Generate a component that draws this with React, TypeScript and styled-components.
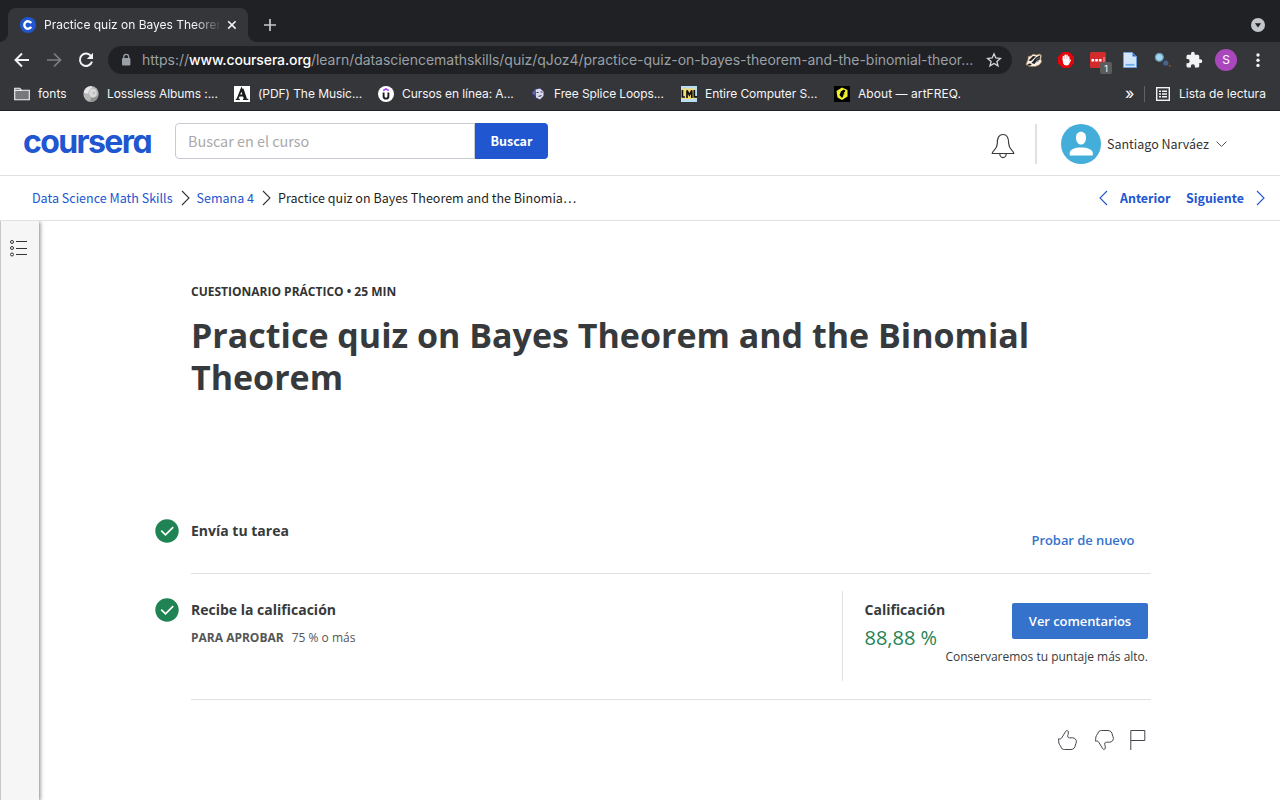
import React from "react";
import styled, { createGlobalStyle } from "styled-components";

const sourceSans = `"Noto Sans CJK SC", "Source Sans Pro", sans-serif`;
const openSans = `"Open Sans", sans-serif`;
const systemSans = `Inter, Roboto, sans-serif`;

const GlobalStyle = createGlobalStyle`
  * { box-sizing: border-box; }
  body { margin: 0; background: #fff; }
  h1, h2, p { margin: 0; }
  button, input { font: inherit; }
`;

const Window = styled.div`
  width: 1280px;
  height: 800px;
  overflow: hidden;
  display: flex;
  flex-direction: column;
  background: #fff;
`;

/* ---------- Browser frame ---------- */

const BrowserFrame = styled.div`
  height: 111px;
  flex: none;
  background: #35363a;
  border-bottom: 1px solid #1f2023;
  font-family: ${systemSans};
  color: #fff;
`;

const TabStrip = styled.div`
  height: 42px;
  padding: 8px 15px 0 8px;
  background: #202124;
  display: flex;
`;

const Tab = styled.div`
  position: relative;
  width: 240px;
  height: 34px;
  padding-left: 12px;
  border-radius: 8px 8px 0 0;
  background: #35363a;
  display: flex;
  align-items: center;
  &::before,
  &::after {
    content: "";
    position: absolute;
    bottom: 0;
    width: 8px;
    height: 8px;
  }
  &::before {
    left: -8px;
    background: radial-gradient(circle at 0 0, #202124 7.5px, #35363a 8px);
  }
  &::after {
    right: -8px;
    background: radial-gradient(circle at 100% 0, #202124 7.5px, #35363a 8px);
  }
`;

const TabTitle = styled.span`
  width: 175px;
  margin: 0 8px;
  overflow: hidden;
  white-space: nowrap;
  font-size: 12px;
  letter-spacing: -0.01px;
  line-height: 18px;
  color: #f4f5f6;
  mask-image: linear-gradient(to right, #000 150px, transparent 178px);
`;

const TabIcon = styled.svg`
  flex: none;
  display: block;
`;

const NewTab = styled.div`
  width: 28px;
  height: 28px;
  margin: 3px 0 0 8px;
  display: grid;
  place-items: center;
`;

const TabSearch = styled.div`
  margin: 10px 0 0 auto;
  height: 14px;
`;

const Toolbar = styled.div`
  height: 36px;
  padding: 0 6px;
  display: flex;
  align-items: center;
`;

const ToolSlot = styled.div`
  position: relative;
  width: 32px;
  height: 32px;
  flex: none;
  display: grid;
  place-items: center;
  svg { display: block; }
`;

const Badge = styled.span`
  position: absolute;
  left: 18px;
  top: 18px;
  width: 12px;
  height: 12px;
  border-radius: 2px;
  background: #5c5c5c;
  font-size: 9px;
  line-height: 13px;
  text-align: center;
`;

const ProfileDot = styled.span`
  width: 22px;
  height: 22px;
  border-radius: 50%;
  background: #ab47bc;
  font-size: 12px;
  line-height: 22px;
  text-align: center;
`;

const Omnibox = styled.div`
  width: 904px;
  height: 28px;
  margin: 0 6px;
  padding: 0 8px 0 12px;
  border-radius: 14px;
  background: #202124;
  display: flex;
  align-items: center;
  svg { flex: none; display: block; }
`;

const Address = styled.span`
  width: 844px;
  flex: none;
  margin-left: 10px;
  white-space: nowrap;
  font-size: 14px;
  letter-spacing: -0.035px;
  line-height: 20px;
  color: #9aa0a6;
`;

const Host = styled.span`
  color: #fff;
  font-weight: 500;
  letter-spacing: -0.12px;
`;

const BookmarkBar = styled.div`
  height: 32px;
  padding: 0 14px;
  display: flex;
  align-items: center;
`;

const Bookmark = styled.div<{ $w: number }>`
  width: ${(p) => p.$w}px;
  display: flex;
  align-items: center;
  gap: 8px;
  svg { flex: none; display: block; }
`;

const BookmarkLabel = styled.span<{ $track?: number }>`
  font-size: 12px;
  line-height: 16px;
  white-space: nowrap;
  color: #f4f5f6;
  letter-spacing: ${(p) => p.$track ?? 0}px;
`;

const Overflow = styled.div`
  margin-left: auto;
  width: 19px;
  font-size: 16px;
  line-height: 16px;
  padding-bottom: 3px;
`;

const BookmarkDivider = styled.div`
  width: 1px;
  height: 16px;
  margin-right: 11px;
  background: #5f6368;
`;

const ReadingList = styled.div`
  width: 110px;
  display: flex;
  align-items: center;
  gap: 9px;
`;

/* ---------- Course header ---------- */

const SiteHeader = styled.header`
  height: 65px;
  flex: none;
  padding: 0 0 0 23px;
  display: flex;
  align-items: flex-start;
  border-bottom: 1px solid #e1e1e1;
  font-family: ${sourceSans};
`;

const Wordmark = styled.div`
  width: 152px;
  margin-top: 11px;
  font-family: Inter, sans-serif;
  font-feature-settings: "cv11";
  font-weight: 700;
  font-size: 32px;
  line-height: 40px;
  letter-spacing: -1.6px;
  color: #2056d0;
`;

const SearchForm = styled.div`
  margin-top: 12px;
  display: flex;
`;

const SearchInput = styled.input`
  width: 300px;
  height: 36px;
  padding: 0 12px 2px;
  border: 1px solid #c7ccd3;
  border-radius: 4px 0 0 4px;
  outline: none;
  font-size: 14.4px;
  color: #333;
  &::placeholder { color: #a9a9a9; }
`;

const SearchButton = styled.button`
  width: 73px;
  height: 36px;
  padding: 0 0 1px;
  border: 0;
  border-radius: 0 4px 4px 0;
  background: #2056d0;
  color: #fff;
  font-weight: 700;
  font-size: 12.5px;
`;

const Account = styled.div`
  margin: 13px 53.500px 0 auto;
  height: 40px;
  display: flex;
  align-items: center;
`;

const Bell = styled.svg`
  display: block;
  margin-top: 3px;
`;

const AccountDivider = styled.div`
  width: 2px;
  height: 40px;
  margin: 0 24px 0 20px;
  background: #e1e1e1;
`;

const UserName = styled.span`
  width: 103px;
  margin: 0 5.500px 2px 6px;
  white-space: nowrap;
  font-size: 12.5px;
  color: #333;
`;

const CrumbBar = styled.nav`
  height: 45px;
  flex: none;
  padding: 0 15px 0 32px;
  display: flex;
  align-items: center;
  border-bottom: 1px solid #e1e1e1;
  font-family: ${sourceSans};
  font-size: 12.54px;
  line-height: 20px;
  white-space: nowrap;
  color: #1f1f1f;
  svg { flex: none; display: block; }
`;

const Crumb = styled.a<{ $w: number; $indent?: number }>`
  width: ${(p) => p.$w}px;
  padding-left: ${(p) => p.$indent ?? 0}px;
  color: #2056d0;
`;

const CurrentCrumb = styled.span`
  padding-left: 7px;
`;

const StepLinks = styled.div`
  margin-left: auto;
  display: flex;
  align-items: center;
  color: #2056d0;
  font-weight: 700;
  font-size: 12.4px;
`;

const StepLabel = styled.span<{ $w: number; $indent?: number }>`
  width: ${(p) => p.$w}px;
  padding-left: ${(p) => p.$indent ?? 0}px;
`;

/* ---------- Body ---------- */

const Body = styled.div`
  flex: 1;
  display: flex;
  overflow: hidden;
  font-family: ${openSans};
  color: #373a3c;
`;

const Rail = styled.aside`
  width: 39px;
  flex: none;
  padding: 18px 0 0 8px;
  border-left: 1px solid #c8c8c8;
  background: #f6f6f6;
  box-shadow: 1px 1px 4px rgba(0, 0, 0, 0.5);
`;

const Content = styled.main`
  width: 996px;
  margin-left: 116px;
  padding-top: 62px;
`;

const Heading = styled.div`
  height: 218px;
  padding-left: 36px;
`;

const Eyebrow = styled.p`
  font-size: 12px;
  font-weight: 700;
  line-height: 18px;
  color: #333;
`;

const Title = styled.h1`
  margin-top: 13px;
  font-size: 34px;
  font-weight: 700;
  line-height: 42px;
`;

const Step = styled.section<{ $top: number; $h: number }>`
  height: ${(p) => p.$h}px;
  display: grid;
  grid-template-columns: 24px 1fr;
  column-gap: 12px;
  & > svg { margin-top: ${(p) => p.$top}px; }
`;

const StepBody = styled.div`
  display: flex;
  justify-content: space-between;
  border-bottom: 1px solid #e1e1e1;
`;

const StepText = styled.div<{ $top: number }>`
  padding-top: ${(p) => p.$top}px;
`;

const StepTitle = styled.h2`
  font-size: 14px;
  font-weight: 700;
  line-height: 24px;
  white-space: nowrap;
`;

const PassRule = styled.p`
  margin-top: 6px;
  display: flex;
  gap: 8px;
  font-size: 12px;
  line-height: 20px;
  color: #565656;
`;

const RetryLink = styled.a`
  padding: 29px 16.500px 0 0;
  font-size: 13px;
  font-weight: 600;
  line-height: 20px;
  letter-spacing: -0.07px;
  color: #3572cb;
`;

const GradePanel = styled.div`
  width: 309px;
  height: 90px;
  margin-top: 17px;
  padding: 0 3px 0 21.500px;
  border-left: 1px solid #e1e1e1;
  display: flex;
`;

const Grade = styled.div`
  width: 80px;
  padding-top: 7px;
`;

const Score = styled.p`
  font-size: 20px;
  line-height: 28px;
  margin-top: 2px;
  white-space: nowrap;
  color: #1f8354;
`;

const GradeActions = styled.div`
  flex: 1;
  padding-top: 12px;
  display: flex;
  flex-direction: column;
  align-items: flex-end;
`;

const FeedbackButton = styled.button`
  width: 136px;
  height: 36px;
  padding: 0;
  border: 0;
  border-radius: 2px;
  background: #3572cb;
  color: #fff;
  font-size: 13px;
  font-weight: 600;
  letter-spacing: -0.07px;
`;

const KeepNote = styled.p`
  margin-top: 8px;
  font-size: 12px;
  line-height: 20px;
  white-space: nowrap;
`;

const Reactions = styled.div`
  padding: 30px 4px 0 0;
  display: flex;
  justify-content: flex-end;
  svg { display: block; }
`;

const ReactionGap = styled.span<{ $w: number }>`
  width: ${(p) => p.$w}px;
`;

function Chevron({ dir, color }: { dir: "left" | "right"; color: string }) {
  return (
    <svg width="9" height="16" viewBox="0 0 9 16" fill="none" stroke={color} strokeWidth="1.1">
      <path d={dir === "right" ? "M1 1l7 7-7 7" : "M8 1L1 8l7 7"} />
    </svg>
  );
}

function CheckBadge() {
  return (
    <svg width="24" height="24" viewBox="0 0 24 24">
      <circle cx="12" cy="12" r="11.7" fill="#1f8354" />
      <path d="M6.2 11.6l4.300 4.300 7.700-7.700" fill="none" stroke="#fff" strokeWidth="1.700" />
    </svg>
  );
}

const thumbPath =
  "M.6 8.8C1.6 9.2 3 9 3.6 8 5 5.8 6.500 3.500 7.800 1.200 8.500.200 10 .500 10.300 1.700 10.700 3.500 9.300 5.500 9.800 7 10.200 8.300 12.500 7.700 14.500 7.800 17 7.900 18.400 9.600 18.400 11.800 18.400 13.300 17.500 13.800 17.400 15 17.200 17.500 15.500 19.500 13 19.500H6.500C4.500 19.500 3.500 18.600 3 17 2.500 15.500 1.300 15 .900 13 .600 11.500 .600 10 .600 8.800Z";

function Thumb({ down }: { down?: boolean }) {
  return (
    <svg width="20" height="20" viewBox="0 0 20 20" fill="none" stroke="#42464d" strokeWidth="1">
      <path d={thumbPath} transform={down ? "matrix(1 0 0 -1 0 20)" : undefined} />
    </svg>
  );
}

function Browser() {
  return (
    <BrowserFrame>
      <TabStrip>
        <Tab>
          <TabIcon width="16" height="16" viewBox="0 0 16 16">
            <circle cx="8" cy="8" r="8" fill="#2056d0" />
            <path d="M11.200 6.100A3.700 3.700 0 1 0 11.200 9.900" fill="none" stroke="#fff" strokeWidth="2.400" />
          </TabIcon>
          <TabTitle>Practice quiz on Bayes Theorem</TabTitle>
          <TabIcon width="10" height="10" viewBox="0 0 10 10" stroke="#f1f3f4" strokeWidth="1.600">
            <path d="M1.200 1.200l7.400 7.400M8.600 1.200L1.200 8.600" />
          </TabIcon>
        </Tab>
        <NewTab>
          <svg width="14" height="14" viewBox="0 0 14 14" stroke="#c6c8cb" strokeWidth="1.700">
            <path d="M7 1v12M1 7h12" />
          </svg>
        </NewTab>
        <TabSearch>
          <TabIcon width="14" height="14" viewBox="0 0 14 14">
            <circle cx="7" cy="7" r="7" fill="#c3c6ca" />
            <path d="M3.900 5.200h6.200L7 9.400z" fill="#202124" />
          </TabIcon>
        </TabSearch>
      </TabStrip>

      <Toolbar>
        <ToolSlot>
          <svg width="16" height="16" viewBox="0 0 16 16" fill="none" stroke="#f1f3f4" strokeWidth="1.900">
            <path d="M15 8H2M8 1.500L1.500 8 8 14.500" />
          </svg>
        </ToolSlot>
        <ToolSlot>
          <svg width="16" height="16" viewBox="0 0 16 16" fill="none" stroke="#7d7f83" strokeWidth="1.700">
            <path d="M1 8h13M8 1.500L14.500 8 8 14.500" />
          </svg>
        </ToolSlot>
        <ToolSlot>
          <svg width="16" height="16" viewBox="0 0 16 16">
            <path d="M13.200 4.200A6.200 6.200 0 1 0 14 9.600" fill="none" stroke="#f1f3f4" strokeWidth="1.900" />
            <path d="M15 .800v6.200H8.800z" fill="#f1f3f4" />
          </svg>
        </ToolSlot>
        <Omnibox>
          <svg width="12" height="14" viewBox="0 0 12 14">
            <rect x="2" y="5" width="8.400" height="7.500" rx="1" fill="#9aa0a6" />
            <path d="M3.800 5.500V3.800a2.400 2.400 0 0 1 4.800 0v1.700" fill="none" stroke="#9aa0a6" strokeWidth="1.300" />
          </svg>
          <Address>
            https://<Host>www.coursera.org</Host>/learn/datasciencemathskills/quiz/qJoz4/practice-quiz-on-bayes-theorem-and-the-binomial-theor...
          </Address>
          <svg width="16" height="16" viewBox="0 0 16 16" fill="none" stroke="#d5d7da" strokeWidth="1.300">
            <path d="M8 1.800l1.800 4.200 4.600.4-3.500 3 1.100 4.500L8 11.500l-4 2.400 1.100-4.500-3.500-3 4.600-.4z" />
          </svg>
        </Omnibox>
        <ToolSlot>
          <svg width="18" height="16" viewBox="0 0 18 16">
            <path
              d="M1 12.500L3 7.500 3.300 4.500 6 4l2-1.800 3.500.8L15 2l1.500 1.500-.7 3L16.500 10 14 13l-4 1.500-6-.2z"
              fill="#f7f3ea"
              stroke="#b98250"
              strokeWidth=".700"
            />
            <path d="M3.500 8.500L8 4l3 .5L6 9zM6.500 11L11 5.500l4.500-2.500-1 5-2.500.8-2.500 3.200zM1.800 13.200l2.200-1.800 3 .5L5 13.800z" fill="#222" />
            <path d="M11 7.500l3.500-2M10 10.500l4-1.500" stroke="#888" strokeWidth=".800" />
          </svg>
        </ToolSlot>
        <ToolSlot>
          <svg width="16" height="16" viewBox="0 0 16 16">
            <path d="M4.700 0h6.600L16 4.700v6.600L11.300 16H4.700L0 11.300V4.700z" fill="#e2050d" />
            <path
              d="M5.400 8V4.600M7.200 7.500V3.200M9 7.500V3.400M10.700 8V5"
              fill="none"
              stroke="#fff"
              strokeWidth="1.600"
              strokeLinecap="round"
            />
            <path d="M4.600 7h6.900v3.600c0 1.800-1 3-3 3-1.700 0-2.700-.700-3.300-2z" fill="#fff" />
            <path d="M11 10.500l1.500-2.300" stroke="#fff" strokeWidth="1.200" strokeLinecap="round" />
          </svg>
        </ToolSlot>
        <ToolSlot>
          <svg width="16" height="16" viewBox="0 0 16 16">
            <rect width="16" height="16" rx="1.500" fill="#d32b2b" />
            <path d="M1.500 7h2.600v2.400H1.500zM5.200 7h2.600v2.400H5.200zM8.900 7h2.600v2.400H8.900z" fill="#fff" />
            <path d="M14 5v5" stroke="#f1a0a0" strokeWidth="1.100" />
          </svg>
          <Badge>1</Badge>
        </ToolSlot>
        <ToolSlot>
          <svg width="14" height="16" viewBox="0 0 14 16">
            <path d="M.5.500h9l4 4v11H.5z" fill="#d3e5f9" stroke="#6f9fd8" />
            <path d="M9.500.500v4h4z" fill="#2e6fc4" />
            <path d="M2.500 12.800h9" stroke="#6aaeea" strokeWidth="1.800" />
          </svg>
        </ToolSlot>
        <ToolSlot>
          <svg width="17" height="16" viewBox="0 0 17 16">
            <path d="M8 8l5 3M7.500 12.500l7-5M10.500 7.500l3 6.500M8.500 14.500l3-3" stroke="#2a3a55" strokeWidth="1.300" />
            <circle cx="5.300" cy="5.300" r="4" fill="#9fd6f2" stroke="#6d93ab" strokeWidth="1.200" />
            <circle cx="11.800" cy="11" r="2.600" fill="#4a6388" />
            <path d="M15 13.300l1.600 1.200" stroke="#a85232" strokeWidth="1.300" />
          </svg>
        </ToolSlot>
        <ToolSlot>
          <svg width="18" height="18" viewBox="0 0 24 24" fill="#f1f3f4">
            <path d="M20.500 11H19V7c0-1.100-.9-2-2-2h-4V3.500a2.500 2.500 0 0 0-5 0V5H4c-1.100 0-2 .9-2 2v3.800h1.500a2.700 2.700 0 0 1 0 5.400H2V20c0 1.100.9 2 2 2h3.800v-1.500a2.700 2.700 0 0 1 5.400 0V22H17c1.100 0 2-.9 2-2v-4h1.500a2.500 2.500 0 0 0 0-5z" />
          </svg>
        </ToolSlot>
        <ToolSlot>
          <ProfileDot>S</ProfileDot>
        </ToolSlot>
        <ToolSlot>
          <svg width="4" height="16" viewBox="0 0 4 16" fill="#f1f3f4">
            <circle cx="2" cy="3" r="1.700" />
            <circle cx="2" cy="8.200" r="1.700" />
            <circle cx="2" cy="13.400" r="1.700" />
          </svg>
        </ToolSlot>
      </Toolbar>

      <BookmarkBar>
        <Bookmark $w={69}>
          <svg width="16" height="14" viewBox="0 0 16 14" fill="#77787b" stroke="#f1f3f4" strokeWidth="1.100">
            <path d="M.7 12.800V1.200h5l1.600 2h8v9.600z" />
            <path d="M.7 3.400h7" fill="none" />
          </svg>
          <BookmarkLabel>fonts</BookmarkLabel>
        </Bookmark>
        <Bookmark $w={151}>
          <svg width="16" height="16" viewBox="0 0 16 16">
            <ellipse cx="8" cy="8" rx="7.600" ry="8" fill="#b7b7b7" />
            <path d="M1 7C1 3 5 0 9 .400L8 8z" fill="#e7e7e7" />
            <path d="M15 10c-1 4-5 6-8 5.500L9 9z" fill="#909090" />
            <ellipse cx="10" cy="7" rx="4.200" ry="4.800" fill="#d8d8d8" stroke="#a0a0a0" strokeWidth=".500" />
            <circle cx="11" cy="7" r="1.300" fill="#bbb" />
          </svg>
          <BookmarkLabel $track={-0.07}>Lossless Albums :...</BookmarkLabel>
        </Bookmark>
        <Bookmark $w={144}>
          <svg width="16" height="16" viewBox="0 0 16 16">
            <rect width="16" height="16" fill="#fff" />
            <path d="M3.500 13L7.500 3l4 10M5 9.500h5" fill="none" stroke="#1c1c1c" strokeWidth="1.800" />
            <path d="M8 3l3.500 10" stroke="#1c1c1c" strokeWidth="3" />
            <path d="M1.800 13.400h4M9 13.400h5.300" stroke="#1c1c1c" strokeWidth="1.300" />
          </svg>
          <BookmarkLabel $track={-0.06}>(PDF) The Music...</BookmarkLabel>
        </Bookmark>
        <Bookmark $w={152}>
          <svg width="16" height="16" viewBox="0 0 16 16">
            <circle cx="8" cy="8" r="8" fill="#fff" />
            <path d="M5.200 4.600L8 2.900l2.800 1.700" fill="none" stroke="#a435f0" strokeWidth="1.500" />
            <path d="M5.600 6.500v3.700a2.400 2.400 0 0 0 4.800 0V6.500" fill="none" stroke="#1c1d1f" strokeWidth="1.900" />
          </svg>
          <BookmarkLabel $track={-0.08}>Cursos en línea: A...</BookmarkLabel>
        </Bookmark>
        <Bookmark $w={151}>
          <svg width="16" height="16" viewBox="0 0 16 16">
            <circle cx="8" cy="7.500" r="6.300" fill="#34355a" />
            <path d="M5.500 3.500l4.500-1 3.500 3v4.500l-3.500 3.500-4-2z" fill="#d9dbea" />
            <path d="M6.500 6.500h2M10.500 6h2M8.500 10.500l3-1" stroke="#3a3b66" strokeWidth="1.100" />
            <path d="M2 7l2.500-3 1 6z" fill="#6567a8" />
          </svg>
          <BookmarkLabel $track={-0.1}>Free Splice Loops...</BookmarkLabel>
        </Bookmark>
        <Bookmark $w={153}>
          <svg width="16" height="16" viewBox="0 0 16 16">
            <rect width="16" height="16" fill="#b9dcf0" />
            <rect x="1" y="2.500" width="14" height="10.500" fill="#f4dc70" />
            <path
              d="M1.400 4v7h2.500M6 12V4.500L8.400 9l2.400-4.500V12M13.300 4v6.800H16"
              fill="none"
              stroke="#111"
              strokeWidth="1.700"
            />
          </svg>
          <BookmarkLabel $track={-0.06}>Entire Computer S...</BookmarkLabel>
        </Bookmark>
        <Bookmark $w={140}>
          <svg width="16" height="16" viewBox="0 0 16 16">
            <rect width="16" height="16" fill="#000" />
            <path d="M8 1.500l5.500 2.500v6.500L8 14l-4.500-2.500L2.500 5z" fill="#f2f22c" />
            <path d="M7 5.200l3-1.700 1.300 1.300-1 3.700L8 12 5.500 9z" fill="#000" />
            <path d="M10.700 6l-1 4" stroke="#f2f22c" strokeWidth=".800" />
          </svg>
          <BookmarkLabel $track={0.06}>About — artFREQ.</BookmarkLabel>
        </Bookmark>
        <Overflow>»</Overflow>
        <BookmarkDivider />
        <ReadingList>
          <svg width="14" height="14" viewBox="0 0 14 14" fill="none" stroke="#f1f3f4">
            <rect x=".7" y=".7" width="12.600" height="12.600" strokeWidth="1.400" />
            <path d="M3 4.200h2M3 7h2M3 9.800h2M6 4.200h5M6 7h5M6 9.800h5" strokeWidth="1.500" />
          </svg>
          <BookmarkLabel>Lista de lectura</BookmarkLabel>
        </ReadingList>
      </BookmarkBar>
    </BrowserFrame>
  );
}

export default function App() {
  return (
    <Window>
      <GlobalStyle />
      <Browser />

      <SiteHeader>
        <Wordmark>coursera</Wordmark>
        <SearchForm>
          <SearchInput placeholder="Buscar en el curso" />
          <SearchButton>Buscar</SearchButton>
        </SearchForm>
        <Account>
          <Bell width="24" height="26" viewBox="0 0 24 26" fill="none" stroke="#373a3c" strokeWidth="1.200">
            <path d="M1.200 20.500C1.200 17.500 6.300 16.500 6.300 10.500 6.300 5.500 7.500 1.500 12 1.500S17.700 5.500 17.700 10.500C17.700 16.500 22.800 17.500 22.800 20.500Z" />
            <path d="M8.800 20.800a3.200 3.800 0 0 0 6.400 0" />
          </Bell>
          <AccountDivider />
          <svg width="40" height="40" viewBox="0 0 40 40">
            <circle cx="20" cy="20" r="20" fill="#43aeda" />
            <path d="M20 7.800c3 0 5 2.200 5 5.700 0 4-2 7.100-5 7.100s-5-3.100-5-7.100c0-3.500 2-5.700 5-5.700z" fill="#fff" />
            <path d="M8.700 31.500v-2.300c0-3.700 5-5.700 11.300-5.700s11.800 2 11.800 5.700v2.300z" fill="#fff" />
          </svg>
          <UserName>Santiago Narváez</UserName>
          <svg width="11" height="8" viewBox="0 0 11 8" fill="none" stroke="#555">
            <path d="M.5 1.500l5 5 5-5" />
          </svg>
        </Account>
      </SiteHeader>

      <CrumbBar>
        <Crumb $w={149}>Data Science Math Skills</Crumb>
        <Chevron dir="right" color="#333" />
        <Crumb $w={72} $indent={6.5}>
          Semana 4
        </Crumb>
        <Chevron dir="right" color="#333" />
        <CurrentCrumb>Practice quiz on Bayes Theorem and the Binomia…</CurrentCrumb>
        <StepLinks>
          <Chevron dir="left" color="#2056d0" />
          <StepLabel $w={78} $indent={12}>
            Anterior
          </StepLabel>
          <StepLabel $w={70}>Siguiente</StepLabel>
          <Chevron dir="right" color="#2056d0" />
        </StepLinks>
      </CrumbBar>

      <Body>
        <Rail>
          <svg width="18" height="18" viewBox="0 0 18 18" fill="none" stroke="#333" strokeWidth="1">
            <circle cx="3" cy="3" r="1.500" />
            <circle cx="3" cy="9" r="1.500" />
            <circle cx="3" cy="15.500" r="1.500" />
            <path d="M7 2.500h11M7 9.500h11M7 15.500h11" />
          </svg>
        </Rail>
        <Content>
          <Heading>
            <Eyebrow>CUESTIONARIO PRÁCTICO • 25 MIN</Eyebrow>
            <Title>Practice quiz on Bayes Theorem and the Binomial Theorem</Title>
          </Heading>

          <Step $top={18} $h={73}>
            <CheckBadge />
            <StepBody>
              <StepText $top={18}>
                <StepTitle>Envía tu tarea</StepTitle>
              </StepText>
              <RetryLink>Probar de nuevo</RetryLink>
            </StepBody>
          </Step>

          <Step $top={24} $h={126}>
            <CheckBadge />
            <StepBody>
              <StepText $top={24}>
                <StepTitle>Recibe la calificación</StepTitle>
                <PassRule>
                  <b>PARA APROBAR</b>
                  <span>75 % o más</span>
                </PassRule>
              </StepText>
              <GradePanel>
                <Grade>
                  <StepTitle>Calificación</StepTitle>
                  <Score>88,88 %</Score>
                </Grade>
                <GradeActions>
                  <FeedbackButton>Ver comentarios</FeedbackButton>
                  <KeepNote>Conservaremos tu puntaje más alto.</KeepNote>
                </GradeActions>
              </GradePanel>
            </StepBody>
          </Step>

          <Reactions>
            <Thumb />
            <ReactionGap $w={17} />
            <Thumb down />
            <ReactionGap $w={15} />
            <svg width="17" height="20" viewBox="0 0 17 20" fill="none" stroke="#42464d">
              <path d="M.8 20V.5h14v10H.8" />
            </svg>
          </Reactions>
        </Content>
      </Body>
    </Window>
  );
}
